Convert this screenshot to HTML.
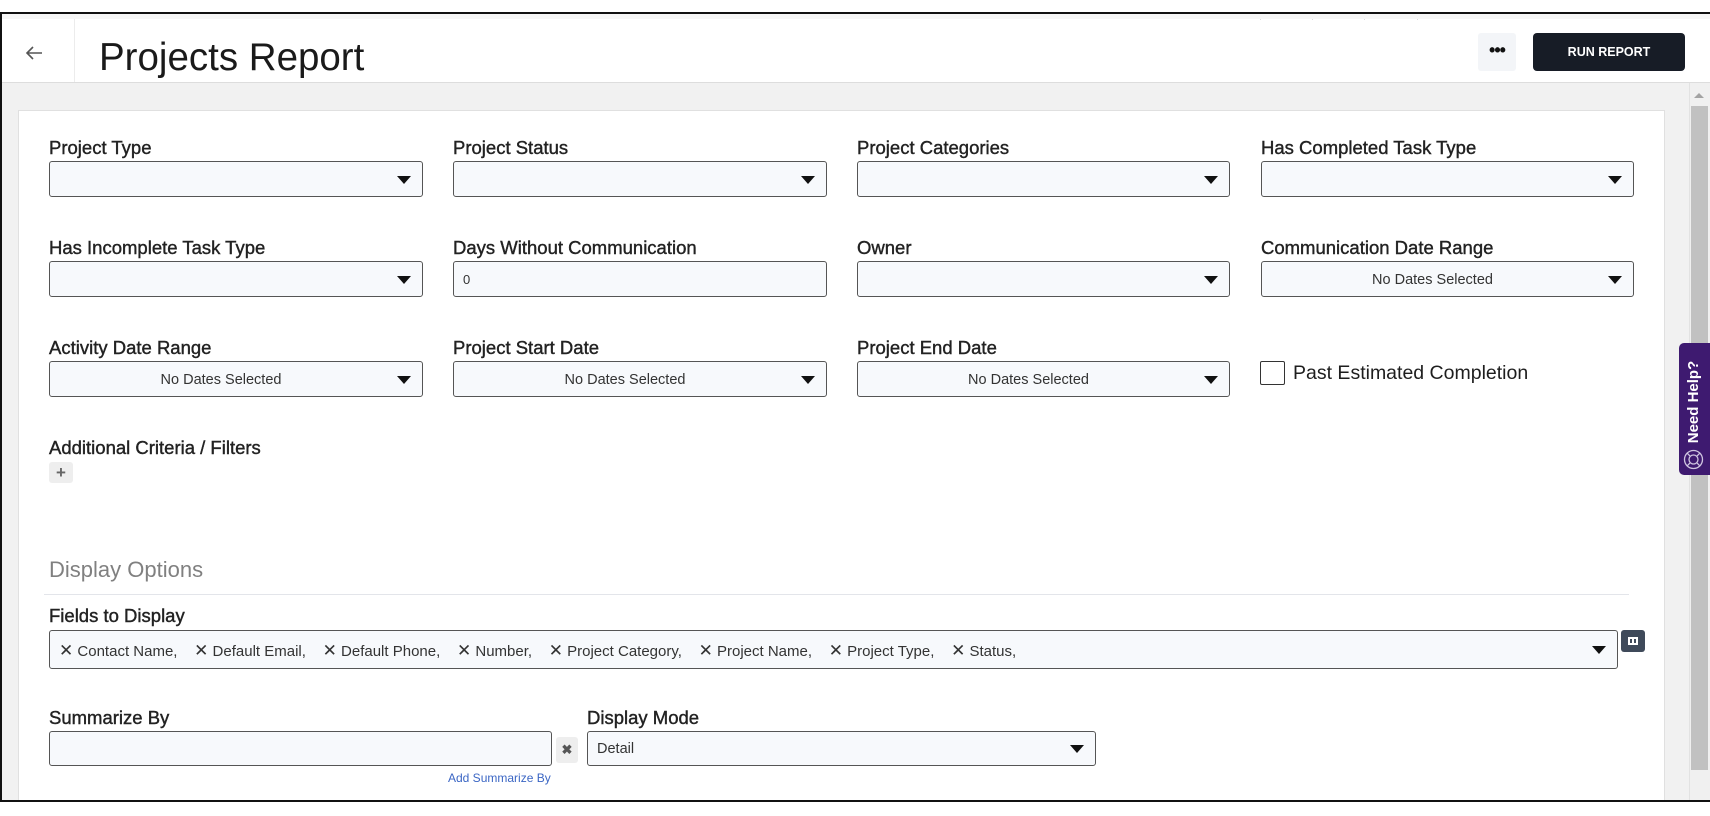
<!DOCTYPE html>
<html><head><meta charset="utf-8"><style>
*{box-sizing:border-box;margin:0;padding:0}
body{width:1710px;height:816px;overflow:hidden;background:#fff;font-family:"Liberation Sans",sans-serif;color:#222;position:relative}
.a{position:absolute}
.lbl{position:absolute;font-size:18.5px;color:#222;line-height:20px;-webkit-text-stroke:0.4px #222}
.box{position:absolute;height:36px;background:#f7f9fc;border:1px solid #555;border-radius:3px;font-size:13px;color:#333}
.tri{position:absolute;right:11px;top:14px;width:0;height:0;border-left:7px solid transparent;border-right:7px solid transparent;border-top:8px solid #111}
.ctr{position:absolute;left:0;right:30px;top:10px;text-align:center;font-size:14.5px;color:#333}
</style></head><body>
<div class="a" style="left:0;top:12px;width:1710px;height:2px;background:#111"></div>
<div class="a" style="left:0;top:12px;width:2px;height:790px;background:#111"></div>
<div class="a" style="left:1260px;top:14px;width:1px;height:6px;background:#ddd"></div>
<div class="a" style="left:1312px;top:14px;width:1px;height:6px;background:#ddd"></div>
<div class="a" style="left:1364px;top:14px;width:1px;height:6px;background:#ddd"></div>
<div class="a" style="left:1417px;top:14px;width:1px;height:6px;background:#ddd"></div>
<div class="a" style="left:2px;top:14px;width:1708px;height:5px;background:#f6f6f6"></div>
<div class="a" style="left:74px;top:19px;width:1px;height:64px;background:#ececec"></div>
<svg class="a" style="left:24px;top:44px" width="20" height="18" viewBox="0 0 20 18"><path d="M18 9H3M9 3L3 9l6 6" fill="none" stroke="#555" stroke-width="1.6"/></svg>
<div class="a" style="left:99px;top:35px;font-size:38.5px;color:#1a1a1a;line-height:46px">Projects Report</div>
<div class="a" style="left:1478px;top:33px;width:38px;height:38px;background:#f3f5f8;border-radius:3px;text-align:center;font-size:18px;line-height:34px;font-weight:bold;color:#111;letter-spacing:-1px">•••</div>
<div class="a" style="left:1533px;top:33px;width:152px;height:38px;background:#171c26;border-radius:4px;color:#fff;font-weight:bold;font-size:12.5px;text-align:center;line-height:38px">RUN REPORT</div>
<div class="a" style="left:2px;top:82px;width:1708px;height:1px;background:#ddd"></div>
<div class="a" style="left:2px;top:83px;width:1687px;height:718px;background:#f1f1f1"></div>
<div class="a" style="left:18px;top:110px;width:1647px;height:691px;background:#fff;border:1px solid #e0e0e0;border-bottom:none"></div>
<div class="a" style="left:1689px;top:83px;width:21px;height:718px;background:#f0f0f0;border-left:1px solid #e2e2e2"></div>
<div class="a" style="left:1694px;top:93px;width:0;height:0;border-left:5px solid transparent;border-right:5px solid transparent;border-bottom:5px solid #a3a3a3"></div>
<div class="a" style="left:1691px;top:106px;width:17px;height:664px;background:#c1c1c1"></div>
<div class="a" style="left:1679px;top:343px;width:31px;height:132px;background:#3e1a70;border-radius:5px 0 0 5px"></div>
<div class="a" style="left:1646px;top:393px;width:96px;height:18px;transform:rotate(-90deg);color:#fff;font-weight:bold;font-size:15px;line-height:18px;text-align:center">Need Help?</div>
<svg class="a" style="left:1683px;top:449px" width="21" height="21" viewBox="0 0 21 21"><g fill="none" stroke="#cfc5e0" stroke-width="1.3"><circle cx="10.5" cy="10.5" r="9"/><circle cx="10.5" cy="10.5" r="4.5"/><path d="M4.2 4.2l3.2 3.2M16.8 4.2l-3.2 3.2M4.2 16.8l3.2-3.2M16.8 16.8l-3.2-3.2"/></g></svg>
<div class="a" style="left:0;top:800px;width:1710px;height:2px;background:#111"></div>
<div class="a" style="left:0;top:802px;width:1710px;height:14px;background:#fff"></div>

<div class="lbl" style="left:49px;top:138px">Project Type</div>
<div class="box" style="left:49px;top:161px;width:374px"><div class="tri"></div></div>
<div class="lbl" style="left:453px;top:138px">Project Status</div>
<div class="box" style="left:453px;top:161px;width:374px"><div class="tri"></div></div>
<div class="lbl" style="left:857px;top:138px">Project Categories</div>
<div class="box" style="left:857px;top:161px;width:373px"><div class="tri"></div></div>
<div class="lbl" style="left:1261px;top:138px">Has Completed Task Type</div>
<div class="box" style="left:1261px;top:161px;width:373px"><div class="tri"></div></div>
<div class="lbl" style="left:49px;top:238px">Has Incomplete Task Type</div>
<div class="box" style="left:49px;top:261px;width:374px"><div class="tri"></div></div>
<div class="lbl" style="left:453px;top:238px">Days Without Communication</div>
<div class="box" style="left:453px;top:261px;width:374px"><div class="a" style="left:9px;top:10px;font-size:13px">0</div></div>
<div class="lbl" style="left:857px;top:238px">Owner</div>
<div class="box" style="left:857px;top:261px;width:373px"><div class="tri"></div></div>
<div class="lbl" style="left:1261px;top:238px">Communication Date Range</div>
<div class="box" style="left:1261px;top:261px;width:373px"><div class="ctr">No Dates Selected</div><div class="tri"></div></div>
<div class="lbl" style="left:49px;top:338px">Activity Date Range</div>
<div class="box" style="left:49px;top:361px;width:374px"><div class="ctr">No Dates Selected</div><div class="tri"></div></div>
<div class="lbl" style="left:453px;top:338px">Project Start Date</div>
<div class="box" style="left:453px;top:361px;width:374px"><div class="ctr">No Dates Selected</div><div class="tri"></div></div>
<div class="lbl" style="left:857px;top:338px">Project End Date</div>
<div class="box" style="left:857px;top:361px;width:373px"><div class="ctr">No Dates Selected</div><div class="tri"></div></div>
<div class="a" style="left:1260px;top:361px;width:25px;height:24px;border:1px solid #333;border-radius:2px;background:#fff"></div>
<div class="a" style="left:1293px;top:362px;font-size:19.5px;color:#1e1e1e">Past Estimated Completion</div>
<div class="lbl" style="left:49px;top:438px">Additional Criteria / Filters</div>
<div class="a" style="left:49px;top:462px;width:24px;height:21px;background:#eee;border-radius:3px;text-align:center;font-weight:bold;font-size:17px;line-height:21px;color:#666">+</div>
<div class="a" style="left:49px;top:557px;font-size:22px;color:#808080">Display Options</div>
<div class="a" style="left:44px;top:594px;width:1585px;height:1px;background:#e3e5ea"></div>
<div class="lbl" style="left:49px;top:606px">Fields to Display</div>
<div class="box" style="left:49px;top:630px;width:1569px;height:39px;font-size:15px">
<div class="a" style="left:9px;top:10px;white-space:nowrap;color:#333"><span style="font-size:17px">✕</span> Contact Name,&nbsp;&nbsp;&nbsp; <span style="font-size:17px">✕</span> Default Email,&nbsp;&nbsp;&nbsp; <span style="font-size:17px">✕</span> Default Phone,&nbsp;&nbsp;&nbsp; <span style="font-size:17px">✕</span> Number,&nbsp;&nbsp;&nbsp; <span style="font-size:17px">✕</span> Project Category,&nbsp;&nbsp;&nbsp; <span style="font-size:17px">✕</span> Project Name,&nbsp;&nbsp;&nbsp; <span style="font-size:17px">✕</span> Project Type,&nbsp;&nbsp;&nbsp; <span style="font-size:17px">✕</span> Status,</div>
<div class="tri" style="top:15px"></div></div>
<div class="a" style="left:1621px;top:630px;width:24px;height:22px;background:#3f4a5a;border-radius:3px"></div>
<div class="a" style="left:1628px;top:637px;width:10px;height:8px;border:2px solid #fff;background:#3f4a5a"><div class="a" style="left:2px;top:0;width:2px;height:4px;background:#fff"></div></div>
<div class="lbl" style="left:49px;top:708px">Summarize By</div>
<div class="box" style="left:49px;top:731px;width:503px;height:35px"></div>
<div class="a" style="left:556px;top:737px;width:22px;height:26px;background:#eee;border-radius:3px;text-align:center;font-size:13px;line-height:26px;color:#555;font-weight:bold">✖</div>
<div class="lbl" style="left:587px;top:708px">Display Mode</div>
<div class="box" style="left:587px;top:731px;width:509px;height:35px;font-size:14.5px"><div class="a" style="left:9px;top:9px">Detail</div><div class="tri" style="top:13px"></div></div>
<div class="a" style="left:448px;top:771px;font-size:12px;color:#3b66c4">Add Summarize By</div>
</body></html>
